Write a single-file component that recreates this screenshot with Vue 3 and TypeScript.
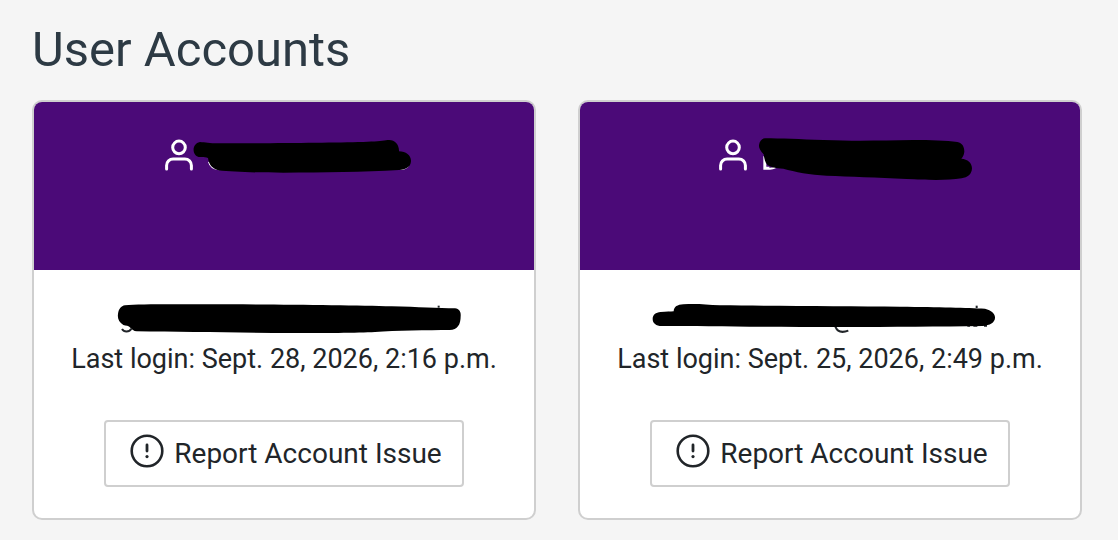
<script setup lang="ts">
interface Mark {
  width: number
  height: number
  viewBox: string
  shape: string
  traces: string[]
}

interface Account {
  id: number
  name: Mark
  email: Mark
  lastLogin: string
}

const accounts: Account[] = [
  {
    id: 1,
    name: {
      width: 210,
      height: 50,
      viewBox: '129 15 630 150',
      shape:
        'M150 51 C166 52 178 55 205 55 C380 55 540 53 640 51 C675 50 695 48 708 46 C730 40 748 55 747 79 C768 79 784 92 783 109 C782 126 768 134 747 135 C640 141 520 142 400 143 C320 143 250 141 205 136 C187 131 176 118 174 99 C165 95 156 96 146 96 C126 92 124 56 150 51Z',
      traces: ['M177 110 C180 122 189 130 206 133', 'M751 132 C762 132 770 128 775 122'],
    },
    email: {
      width: 344,
      height: 36,
      viewBox: '21 30 1032 108',
      shape:
        'M60 46 C100 42 200 43 300 43 C500 43 740 45 860 49 C940 51 1000 55 1050 55 C1064 57 1068 66 1067 78 C1067 104 1058 119 1034 120 C970 121 870 121 810 126 C760 129 650 129 560 129 C400 128 230 126 95 124 C86 123 81 118 76 113 C72 107 62 107 55 105 C42 96 37 86 39 72 C41 57 48 48 60 46Z',
      traces: ['M51 117 C57 127 72 127 79 116', 'M1001 47 V53'],
    },
    lastLogin: 'Sept. 28, 2026, 2:16 p.m.',
  },
  {
    id: 2,
    name: {
      width: 194,
      height: 50,
      viewBox: '141 15 582 150',
      shape:
        'M195 40 C240 40 300 43 370 45 C480 49 550 46 640 45 C690 45 740 47 772 51 C787 54 793 65 793 80 C792 90 788 97 784 101 C803 102 816 114 816 130 C815 149 803 157 785 160 C740 167 680 165 620 162 C530 157 450 155 380 152 C330 149 285 141 250 131 C225 129 210 126 202 119 C195 112 193 102 191 88 C181 77 176 70 177 60 C179 48 185 41 195 40Z',
      traces: ['M193 94 V131 H210 C218 131 222 129 226 127', 'M196 108 V128 H208'],
    },
    email: {
      width: 344,
      height: 36,
      viewBox: '54 30 1032 108',
      shape:
        'M62 66 C78 65 92 65 101 64 C102 50 112 44 130 43 C165 40 195 43 240 46 C400 48 620 48 780 50 C900 51 980 53 1035 56 C1055 61 1066 71 1065 84 C1064 98 1050 106 1028 108 C900 110 760 111 600 111 C400 111 200 109 65 108 C48 108 38 100 38 87 C38 75 47 67 62 66Z',
      traces: ['M586 110 C592 125 606 129 625 122', 'M1010 47 V54', 'M982 107 H990 M1000 107 H1012 M1032 107 H1041'],
    },
    lastLogin: 'Sept. 25, 2026, 2:49 p.m.',
  },
]
</script>

<template>
  <main class="page">
    <h1 class="title">User Accounts</h1>
    <div class="cards">
      <article v-for="account in accounts" :key="account.id" class="card">
        <header class="card-head">
          <svg class="person" viewBox="0 0 28 32" aria-hidden="true">
            <circle cx="14" cy="8.4" r="6.3" />
            <path d="M1.6 30 V26.5 A6.5 6.5 0 0 1 8.1 20 H19.9 A6.5 6.5 0 0 1 26.4 26.5 V30" />
          </svg>
          <svg
            class="mark mark-light"
            :width="account.name.width"
            :height="account.name.height"
            :viewBox="account.name.viewBox"
            aria-hidden="true"
          >
            <path v-for="d in account.name.traces" :key="d" class="trace" :d="d" />
            <path :d="account.name.shape" />
          </svg>
        </header>
        <div class="card-body">
          <svg
            class="mark"
            :width="account.email.width"
            :height="account.email.height"
            :viewBox="account.email.viewBox"
            aria-hidden="true"
          >
            <path v-for="d in account.email.traces" :key="d" class="trace" :d="d" />
            <path :d="account.email.shape" />
          </svg>
          <p class="login">Last login: {{ account.lastLogin }}</p>
          <button type="button" class="report">
            <svg class="alert" viewBox="0 0 34 40" aria-hidden="true">
              <circle cx="17" cy="17" r="15.3" />
              <path class="bar" d="M17 11 V17" />
              <circle class="dot" cx="17" cy="22.6" r="1.6" />
            </svg>
            <span>Report Account Issue</span>
          </button>
        </div>
      </article>
    </div>
  </main>
</template>

<style>
body {
  margin: 0;
  background: #f5f5f5;
}
</style>

<style scoped>
.page {
  padding: 20px 36px 20px 32px;
  font-family: Roboto, "Liberation Sans", sans-serif;
  color: #212529;
}

.title {
  margin: 0 0 20px;
  font-size: 49px;
  line-height: 60px;
  font-weight: 400;
  color: #2d3a44;
}

.cards {
  display: grid;
  grid-template-columns: repeat(2, minmax(0, 1fr));
  gap: 42px;
}

.card {
  border: 2px solid #cfcfcf;
  border-radius: 10px;
  background: #fff;
  overflow: hidden;
}

.card-head {
  display: flex;
  justify-content: center;
  align-items: center;
  padding: 28px 0 90px;
  background: #4b0a78;
}

.person {
  width: 28px;
  height: 32px;
  fill: none;
  stroke: #fff;
  stroke-width: 3;
  stroke-linecap: round;
}

.mark {
  display: block;
  overflow: visible;
  fill: #000;
}

.trace {
  fill: none;
  stroke: #212529;
  stroke-width: 6;
}

.mark-light .trace {
  stroke: #fff;
}

.card-body {
  display: flex;
  flex-direction: column;
  align-items: center;
  padding: 30px 0 31px;
}

.login {
  margin: 2px 0 40px;
  font-size: 27px;
  line-height: 42px;
  white-space: nowrap;
}

.report {
  display: flex;
  align-items: center;
  gap: 10px;
  padding: 11px 20px 11px 24px;
  border: 2px solid #cfcfcf;
  border-radius: 4px;
  background: #fff;
  color: inherit;
  font-family: inherit;
  font-size: 28px;
  line-height: 41px;
  white-space: nowrap;
  cursor: pointer;
}

.alert {
  width: 34px;
  height: 40px;
  fill: none;
  stroke: #212529;
  stroke-width: 2.6;
}

.alert .bar {
  stroke-width: 2.8;
  stroke-linecap: round;
}

.alert .dot {
  fill: #212529;
  stroke: none;
}
</style>
